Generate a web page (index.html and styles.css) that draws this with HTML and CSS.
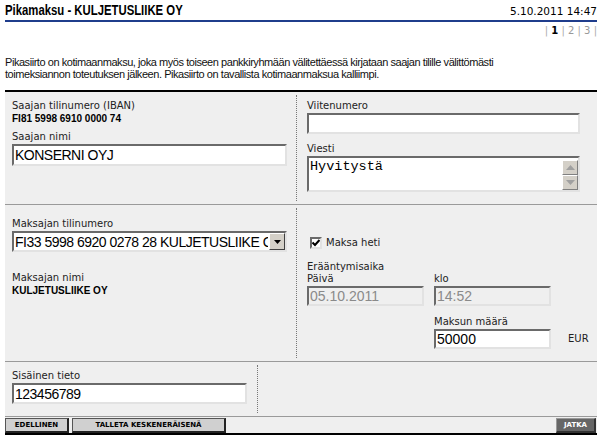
FILE: index.html
```html
<!DOCTYPE html>
<html lang="fi">
<head>
  <meta charset="UTF-8" />
  <meta name="viewport" content="width=device-width, initial-scale=1.0"/>
  <title>Pikamaksu</title>
  <link rel="stylesheet" href="styles.css">
</head>
<body>
<div class="page">

  <div class="head">
    <h1>Pikamaksu - KULJETUSLIIKE OY</h1>
    <span class="date">5.10.2011 14:47</span>
  </div>
  <div class="steps"><span>|</span> <b>1</b> <span>|</span> 2 <span>|</span> 3 <span>|</span></div>

  <p class="intro">Pikasiirto on kotimaanmaksu, joka myös toiseen pankkiryhmään välitettäessä kirjataan saajan tilille välittömästi<br>toimeksiannon toteutuksen jälkeen. Pikasiirto on tavallista kotimaanmaksua kalliimpi.</p>

  <form class="form" onsubmit="return false">

    <!-- Saaja -->
    <div class="section sec-payee">
      <div class="col col-left">
        <div class="field">
          <label>Saajan tilinumero (IBAN)</label>
          <div class="value">FI81 5998 6910 0000 74</div>
        </div>
        <div class="field">
          <label>Saajan nimi</label>
          <input class="text wide" type="text" value="KONSERNI OYJ">
        </div>
      </div>
      <div class="col col-right">
        <div class="field gap-9">
          <label>Viitenumero</label>
          <input class="text ref" type="text" value="">
        </div>
        <div class="field">
          <label>Viesti</label>
          <div class="memo">
            <textarea>Hyvitystä</textarea>
            <div class="scroll">
              <span class="arrow">
                <svg width="9" height="5" viewBox="0 0 9 5"><path d="M4.5 0 L9 5 L0 5 Z" fill="#a0a0a0"/></svg>
              </span>
              <span class="track"></span>
              <span class="arrow">
                <svg width="9" height="5" viewBox="0 0 9 5"><path d="M0 0 L9 0 L4.5 5 Z" fill="#a0a0a0"/></svg>
              </span>
            </div>
          </div>
        </div>
      </div>
    </div>

    <!-- Maksaja -->
    <div class="section sec-payer">
      <div class="col col-left pad-10">
        <div class="field gap-20">
          <label>Maksajan tilinumero</label>
          <div class="select wide">
            <select>
              <option>FI33 5998 6920 0278 28 KULJETUSLIIKE OY</option>
            </select>
            <span class="drop">
              <svg width="7" height="4" viewBox="0 0 7 4"><path d="M0 0 L7 0 L3.5 4 Z" fill="#000"/></svg>
            </span>
          </div>
        </div>
        <div class="field">
          <label>Maksajan nimi</label>
          <div class="value">KULJETUSLIIKE OY</div>
        </div>
      </div>
      <div class="col col-right pad-29">
        <div class="check-row">
          <span class="check">
            <svg width="8" height="8" viewBox="0 0 8 8"><path d="M0.5 3.5 L3 6 L7.5 1" stroke="#000" stroke-width="2" fill="none"/></svg>
          </span>
          <span>Maksa heti</span>
        </div>
        <label class="due-title">Erääntymisaika</label>
        <div class="due">
          <div class="field">
            <label>Päivä</label>
            <input class="text date-in" type="text" value="05.10.2011" disabled>
          </div>
          <div class="field">
            <label>klo</label>
            <input class="text date-in" type="text" value="14:52" disabled>
          </div>
          <div class="field amount">
            <label>Maksun määrä</label>
            <input class="text date-in" type="text" value="50000">
          </div>
          <span class="cur">EUR</span>
        </div>
      </div>
    </div>

    <!-- Sisäinen tieto -->
    <div class="section sec-own">
      <div class="col col-left">
        <div class="field">
          <label>Sisäinen tieto</label>
          <input class="text own" type="text" value="123456789">
        </div>
      </div>
      <div class="col"></div>
    </div>

    <div class="bar">
      <button class="btn btn-prev">EDELLINEN</button>
      <button class="btn btn-save">TALLETA KESKENERÄISENÄ</button>
      <button class="btn btn-next">JATKA</button>
    </div>

  </form>
</div>
</body>
</html>
```

FILE: styles.css
```css
* {
  box-sizing: border-box;
}

body {
  margin: 0;
  font-family: "DejaVu Sans", Verdana, sans-serif;
  color: #000;
  background: #fff;
}

.page {
  width: 606px;
  padding: 0 9px 0 5px;
}

/* Header */
.head {
  display: flex;
  justify-content: space-between;
  align-items: flex-end;
  height: 22px;
  border-bottom: 2px solid #1f3d8c;
  padding-bottom: 2px;
}

.head h1 {
  margin: 0;
  font: bold 14px/16px "Liberation Sans", Arial, sans-serif;
  transform: scaleX(0.81);
  transform-origin: left center;
  white-space: nowrap;
}

.date {
  font-size: 10.5px;
  line-height: 14px;
}

.steps {
  text-align: right;
  font-size: 10px;
  line-height: 12px;
  color: #999;
  margin-top: 3px;
}

.steps span {
  color: #aaa;
}

.steps b {
  color: #000;
}

.intro {
  margin: 19px 0 0;
  font: 11px/12px "Liberation Sans", Arial, sans-serif;
  letter-spacing: -0.45px;
  color: #111;
}

/* Form panel */
.form {
  margin-top: 10px;
  border-top: 2px solid #000;
  border-bottom: 2px solid #000;
  background: #efefef;
}

.section {
  display: grid;
  grid-template-columns: 292px 1fr;
  border-bottom: 1px solid #9a9a9a;
}

.sec-payee { height: 113px; }
.sec-payer { height: 157px; }
.sec-own {
  height: 55px;
  grid-template-columns: 253px 1fr;
}

.col {
  margin: 3px 0;
}

.col-left {
  border-right: 1px dotted #777;
  padding: 5px 0 0 7px;
}

.col-right {
  padding: 5px 0 0 10px;
}

.pad-10 { padding-top: 10px; }
.pad-29 { padding-top: 29px; }

.field {
  margin-bottom: 6px;
}

.gap-9 { margin-bottom: 9px; }
.gap-20 { margin-bottom: 20px; }

label {
  display: block;
  font-size: 10px;
  line-height: 12px;
  color: #222;
  margin-bottom: 1px;
}

.value {
  font: bold 10px/12px "Liberation Sans", Arial, sans-serif;
}

/* Inputs */
.text {
  display: block;
  height: 22px;
  margin: 0;
  padding: 0 1px;
  border: 2px solid;
  border-color: #6a6a6a #e2e2e2 #e2e2e2 #6a6a6a;
  background: #fff;
  font: 14px "Liberation Sans", Arial, sans-serif;
  letter-spacing: -0.5px;
  color: #000;
  outline: none;
}

.wide { width: 275px; }
.ref { width: 273px; height: 21px; }
.own { width: 235px; height: 21px; }
.date-in {
  width: 117px;
  height: 20px;
  letter-spacing: 0;
}

.text:disabled {
  background: #efefef;
  color: #8a8a8a;
}

.memo {
  display: flex;
  width: 273px;
  height: 36px;
  border: 2px solid;
  border-color: #6a6a6a #e2e2e2 #e2e2e2 #6a6a6a;
  background: #fff;
}

.memo textarea {
  flex: 1;
  border: none;
  resize: none;
  overflow: hidden;
  padding: 1px 0 0 1px;
  font: 13.5px/15px "Liberation Mono", "Courier New", monospace;
  outline: none;
}

.scroll {
  display: flex;
  flex-direction: column;
  width: 16px;
  margin: 2px 0 0;
}

.arrow {
  display: flex;
  align-items: center;
  justify-content: center;
  height: 15px;
  background: #d4d0c8;
  border: 1px solid;
  border-color: #fff #808080 #808080 #fff;
}

.track {
  flex: 1;
  background: repeating-linear-gradient(90deg, #d4d0c8 0 1px, #fff 1px 2px);
}

.select {
  display: flex;
  height: 21px;
  border: 2px solid;
  border-color: #6a6a6a #e2e2e2 #e2e2e2 #6a6a6a;
  background: #fff;
}

.select select {
  flex: 1;
  min-width: 0;
  appearance: none;
  border: none;
  padding: 0 1px;
  background: #fff;
  font: 14px "Liberation Sans", Arial, sans-serif;
  letter-spacing: -0.5px;
  color: #000;
  outline: none;
}

.drop {
  display: flex;
  align-items: center;
  justify-content: center;
  width: 16px;
  background: #d4d0c8;
  border: 1px solid;
  border-color: #fff #404040 #404040 #fff;
}

/* Payment date */
.check-row {
  display: flex;
  align-items: center;
  gap: 4px;
  font-size: 10px;
  line-height: 12px;
  color: #222;
  margin-left: 3px;
  margin-bottom: 12px;
}

.check {
  display: flex;
  align-items: center;
  justify-content: center;
  width: 12px;
  height: 12px;
  background: #fff;
  border: 2px solid;
  border-color: #6a6a6a #e2e2e2 #e2e2e2 #6a6a6a;
}

.due-title {
  margin-bottom: 0;
}

.due {
  display: grid;
  grid-template-columns: 117px 117px auto;
  column-gap: 10px;
}

.due .field {
  margin-bottom: 0;
}

.amount {
  grid-column: 2;
  margin-top: 10px;
}

.cur {
  align-self: end;
  font-size: 10px;
  line-height: 20px;
  padding-left: 7px;
  color: #222;
}

/* Button bar */
.bar {
  display: flex;
  height: 16px;
  padding-top: 1px;
}

.btn {
  height: 15px;
  padding: 0;
  border: 1px solid #555;
  border-right: 2px solid #222;
  border-bottom: 2px solid #222;
  background: #d0d0d0;
  font: bold 7px/11px "DejaVu Sans", Verdana, sans-serif;
  color: #000;
  cursor: pointer;
}

.btn-prev { width: 64px; }

.btn-save {
  width: 154px;
  margin-left: 3px;
}

.btn-next {
  width: 40px;
  margin-left: auto;
  margin-right: 1px;
  background: #666;
  color: #fff;
  border-color: #999 #333 #333 #999;
}
```
